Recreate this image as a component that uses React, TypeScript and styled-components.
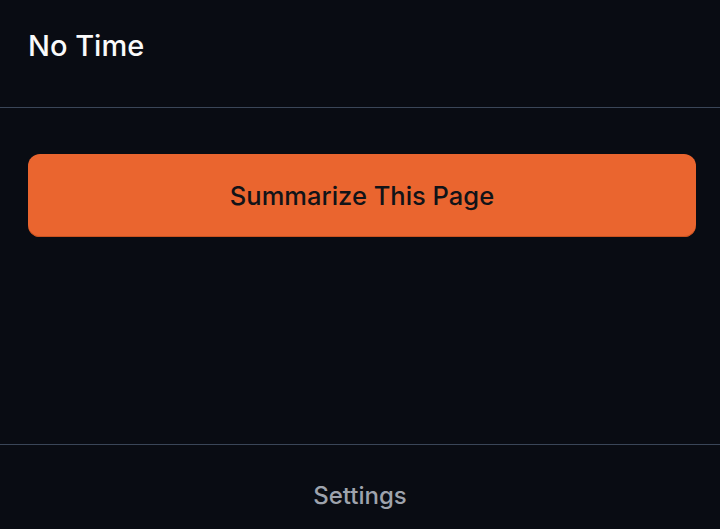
import styled, { createGlobalStyle } from "styled-components"

const GlobalStyle = createGlobalStyle`
  html, body {
    margin: 0;
    padding: 0;
    background: #090c13;
  }
  body {
    font-family: Inter, "Liberation Sans", sans-serif;
    -webkit-font-smoothing: antialiased;
  }
`

const App = () => {
  return (
    <>
      <GlobalStyle />
      <StyledPopup>
        <StyledHeader>
          <StyledTitle>No Time</StyledTitle>
        </StyledHeader>
        <StyledMain>
          <StyledSummarizeButton>Summarize This Page</StyledSummarizeButton>
        </StyledMain>
        <StyledFooter>
          <StyledSettingsLink>Settings</StyledSettingsLink>
        </StyledFooter>
      </StyledPopup>
    </>
  )
}

export default App

const StyledPopup = styled.div`
  display: flex;
  flex-direction: column;
  width: 720px;
  height: 529px;
  background: #090c13;
  color: #fff;
`
const StyledHeader = styled.header`
  height: 107px;
  display: flex;
  align-items: center;
  padding: 0 28px;
  border-bottom: 1px solid #3a4658;
  box-sizing: content-box;
`
const StyledTitle = styled.h1`
  margin: 0 0 16px;
  font-size: 29px;
  font-weight: 500;
  color: #fafafa;
`
const StyledMain = styled.main`
  flex: 1;
  padding: 46px 24px 0 28px;
`
const StyledSummarizeButton = styled.button`
  width: 100%;
  height: 83px;
  border: none;
  border-radius: 12px;
  background: #ea652f;
  box-shadow: inset 0 -1px 0 #c9521f;
  color: #111318;
  font-family: inherit;
  font-size: 25.5px;
  font-weight: 500;
  cursor: pointer;
`
const StyledFooter = styled.footer`
  height: 84px;
  border-top: 1px solid #3a4658;
  display: flex;
  align-items: center;
  justify-content: center;
`
const StyledSettingsLink = styled.a`
  margin-top: 17px;
  font-size: 24px;
  font-weight: 500;
  color: #9ea3ad;
  cursor: pointer;
`
